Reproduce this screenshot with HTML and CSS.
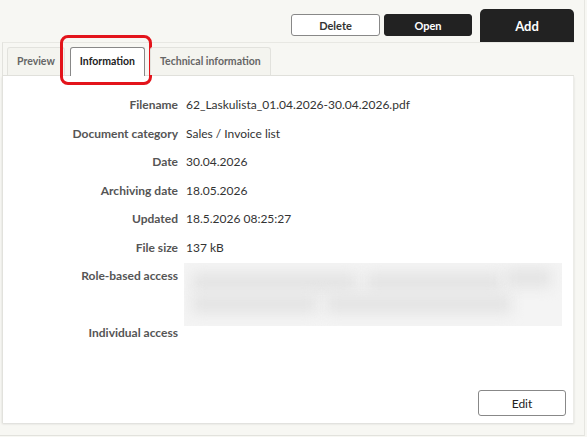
FILE: index.html
```html
<!DOCTYPE html>
<html lang="en">

<head>
    <meta charset="UTF-8" />
    <meta name="viewport" content="width=device-width, initial-scale=1.0" />
    <title>Document</title>
    <link rel="stylesheet" href="styles.css">
</head>

<body>
    <div class="page">
        <div class="window">
            <div class="toolbar">
                <button class="btn btn-light">Delete</button>
                <button class="btn btn-dark">Open</button>
                <button class="btn-add">Add</button>
            </div>

            <div class="tabs">
                <div class="tab">Preview</div>
                <div class="tab active">Information
                    <span class="highlight"></span>
                </div>
                <div class="tab">Technical information</div>
            </div>

            <div class="panel">
                <div class="details">
                    <div class="label">Filename</div>
                    <div class="value">62_Laskulista_01.04.2026-30.04.2026.pdf</div>

                    <div class="label">Document category</div>
                    <div class="value">Sales / Invoice list</div>

                    <div class="label">Date</div>
                    <div class="value">30.04.2026</div>

                    <div class="label">Archiving date</div>
                    <div class="value">18.05.2026</div>

                    <div class="label">Updated</div>
                    <div class="value">18.5.2026 08:25:27</div>

                    <div class="label">File size</div>
                    <div class="value">137 kB</div>

                    <div class="label">Role-based access</div>
                    <div class="value">
                        <div class="hidden-list">
                            <span style="left: 8px; top: 10px; width: 165px;"></span>
                            <span style="left: 182px; top: 10px; width: 135px;"></span>
                            <span style="left: 322px; top: 6px; width: 45px;"></span>
                            <span style="left: 8px; top: 32px; width: 125px;"></span>
                            <span style="left: 142px; top: 32px; width: 185px;"></span>
                        </div>
                    </div>

                    <div class="label">Individual access</div>
                    <div class="value"></div>
                </div>

                <div class="footer">
                    <button class="btn btn-edit">Edit</button>
                </div>
            </div>
        </div>
    </div>
</body>

</html>
```

FILE: styles.css
```css
body {
    margin: 0;
    background: #f7f7f3;
    font-family: Lato, "Noto Sans", sans-serif;
    color: #333;
}

.page {
    width: 584px;
    height: 435px;
    border-right: 1px solid #e6e6e1;
    border-bottom: 1px solid #e2e2dd;
}

.window {
    width: 574px;
}

/* top bar with actions */
.toolbar {
    height: 42px;
    display: flex;
    justify-content: flex-end;
    align-items: flex-start;
}

.btn {
    font-family: inherit;
    font-size: 11px;
    font-weight: bold;
    height: 22px;
    border-radius: 3px;
    cursor: pointer;
}

.btn-light {
    width: 89px;
    margin-top: 14px;
    background: #fff;
    color: #333;
    border: 1px solid #888;
}

.btn-dark {
    width: 88px;
    margin: 14px 8px 0 4px;
    background: #222;
    color: #fff;
    border: 1px solid #222;
}

.btn-add {
    width: 94px;
    height: 33px;
    margin-top: 9px;
    border: none;
    border-radius: 5px 5px 0 0;
    background: #222;
    color: #fff;
    font-family: inherit;
    font-size: 13px;
    font-weight: bold;
}

/* tab strip */
.tabs {
    height: 32px;
    display: flex;
    align-items: flex-end;
    gap: 5px;
    margin-left: 2px;
    padding-left: 4px;
    border-top: 1px solid #e8e8e3;
    border-bottom: 1px solid #e2e2dd;
    border-left: 1px solid #e2e2dd;
}

.tab {
    position: relative;
    height: 27px;
    line-height: 27px;
    padding: 0 9px;
    font-size: 10.5px;
    font-weight: bold;
    color: #666;
    background: #f4f4ef;
    border: 1px solid #e2e2dd;
    border-bottom: none;
    border-radius: 3px 3px 0 0;
}

.tab.active {
    color: #222;
    background: #fff;
    border-color: #888;
    height: 28px;
    margin-bottom: -1px;
}

.highlight {
    position: absolute;
    left: -11px;
    top: -13px;
    width: 86px;
    height: 44px;
    border: 3px solid #e3141b;
    border-radius: 8px;
}

/* information panel */
.panel {
    height: 347px;
    margin-left: 2px;
    display: flex;
    flex-direction: column;
    background: #fff;
    border-left: 1px solid #e2e2dd;
    border-right: 1px solid #ecece8;
    box-shadow: 0 1px 2px rgba(0, 0, 0, 0.12);
}

.details {
    display: grid;
    grid-template-columns: 175px 1fr;
    grid-template-rows: repeat(6, 28.5px) 57px 28.5px;
    column-gap: 8px;
    padding-top: 15px;
    font-size: 12px;
    line-height: 28.5px;
}

.label {
    text-align: right;
    font-weight: bold;
    color: #555;
}

.value {
    color: #333;
}

/* access list is hidden behind a blur */
.hidden-list {
    position: relative;
    width: 378px;
    height: 63px;
    margin: 1px 0 0 -2px;
    background: #f4f4f4;
    overflow: hidden;
}

.hidden-list span {
    position: absolute;
    height: 18px;
    background: #e3e3e3;
    filter: blur(7px);
}

.footer {
    margin-top: auto;
    display: flex;
    justify-content: flex-end;
    padding: 0 7px 7px 0;
}

.btn-edit {
    width: 88px;
    height: 26px;
    background: #fff;
    color: #222;
    border: 1px solid #888;
    font-weight: normal;
    font-size: 12px;
}
```
